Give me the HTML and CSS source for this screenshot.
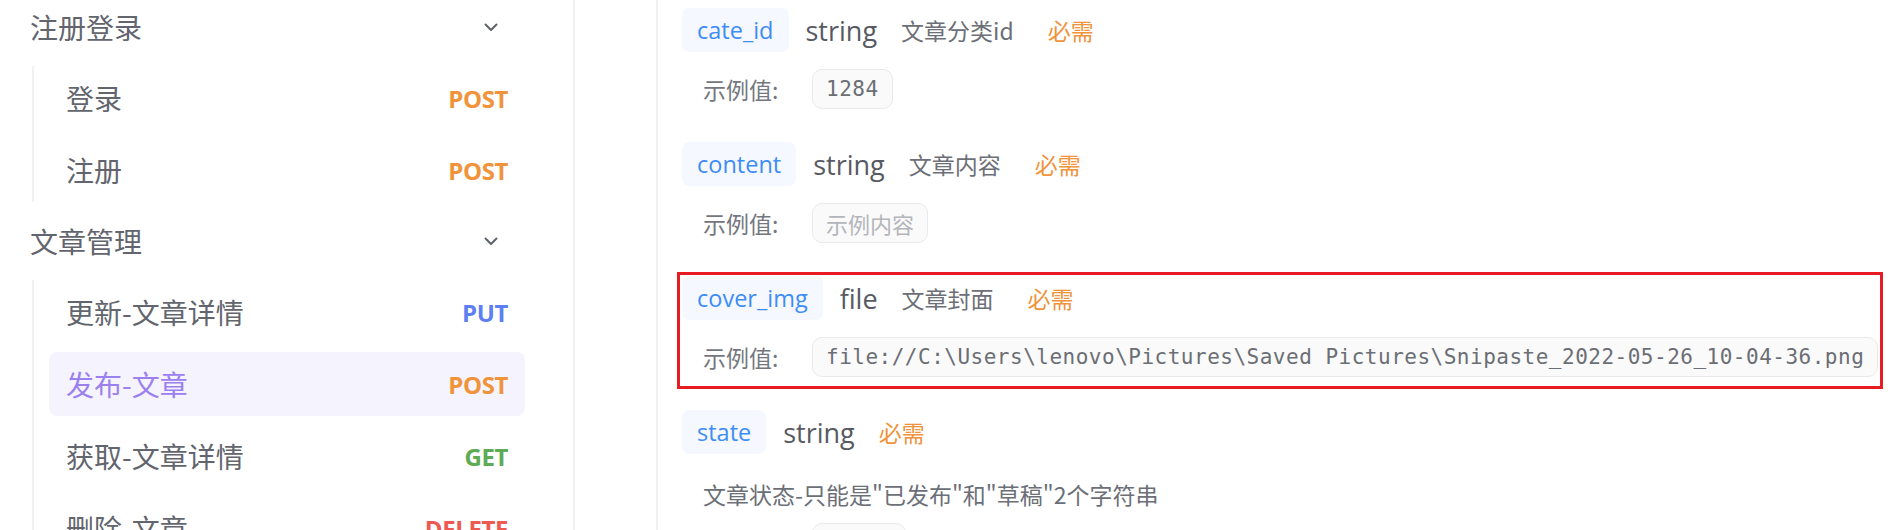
FILE: index.html
```html
<!DOCTYPE html>
<html lang="zh-CN">
<head>
<meta charset="utf-8">
<title>接口文档</title>
<link rel="stylesheet" href="styles.css">
</head>
<body>
<div class="page">
  <aside class="sidebar">
    <div class="group">
      <div class="group-head">
        <span class="group-title">注册登录</span>
        <svg class="chev" width="14" height="9" viewBox="0 0 14 9"><polyline points="1.5,1.5 7,7 12.5,1.5" fill="none" stroke="#5f626a" stroke-width="2" stroke-linecap="round" stroke-linejoin="round"/></svg>
      </div>
      <div class="sublist">
        <div class="item"><span class="item-name">登录</span><span class="m post">POST</span></div>
        <div class="item"><span class="item-name">注册</span><span class="m post">POST</span></div>
      </div>
    </div>
    <div class="group">
      <div class="group-head">
        <span class="group-title">文章管理</span>
        <svg class="chev" width="14" height="9" viewBox="0 0 14 9"><polyline points="1.5,1.5 7,7 12.5,1.5" fill="none" stroke="#5f626a" stroke-width="2" stroke-linecap="round" stroke-linejoin="round"/></svg>
      </div>
      <div class="sublist">
        <div class="item"><span class="item-name">更新-文章详情</span><span class="m put">PUT</span></div>
        <div class="item active"><span class="item-name">发布-文章</span><span class="m post">POST</span></div>
        <div class="item"><span class="item-name">获取-文章详情</span><span class="m get">GET</span></div>
        <div class="item"><span class="item-name">删除-文章</span><span class="m del">DELETE</span></div>
      </div>
    </div>
  </aside>
  <div class="spacer"></div>
  <main class="main">
    <div class="param">
      <div class="param-head">
        <span class="tag">cate_id</span>
        <span class="type">string</span>
        <span class="desc">文章分类id</span>
        <span class="req">必需</span>
      </div>
      <div class="example">
        <span class="ex-label">示例值:</span>
        <span class="ex-box mono">1284</span>
      </div>
    </div>
    <div class="param">
      <div class="param-head">
        <span class="tag">content</span>
        <span class="type">string</span>
        <span class="desc">文章内容</span>
        <span class="req">必需</span>
      </div>
      <div class="example">
        <span class="ex-label">示例值:</span>
        <span class="ex-box placeholder">示例内容</span>
      </div>
    </div>
    <div class="param marked">
      <div class="param-head">
        <span class="tag">cover_img</span>
        <span class="type">file</span>
        <span class="desc">文章封面</span>
        <span class="req">必需</span>
      </div>
      <div class="example">
        <span class="ex-label">示例值:</span>
        <span class="ex-box mono">file://C:\Users\lenovo\Pictures\Saved Pictures\Snipaste_2022-05-26_10-04-36.png</span>
      </div>
    </div>
    <div class="param">
      <div class="param-head">
        <span class="tag">state</span>
        <span class="type">string</span>
        <span class="req">必需</span>
      </div>
      <div class="note">文章状态-只能是"已发布"和"草稿"2个字符串</div>
      <div class="example tight">
        <span class="ex-label">示例值:</span>
        <span class="ex-box placeholder">已发布</span>
      </div>
    </div>
  </main>
</div>
</body>
</html>
```
FILE: styles.css
```css
html, body {
  margin: 0;
  padding: 0;
  background: #ffffff;
  overflow: hidden;
}
body {
  font-family: "Open Sans", "Noto Sans CJK SC", sans-serif;
  color: #60636b;
}
.page {
  display: flex;
  align-items: flex-start;
  height: 530px;
  overflow: hidden;
}
.sidebar {
  width: 495px;
  flex: none;
  padding: 0 48px 0 30px;
  border-right: 2px solid #f0f0f4;
  height: 600px;
}
.group {
  margin-bottom: 12px;
}
.group-head {
  height: 54px;
  display: flex;
  align-items: center;
  justify-content: space-between;
  padding-right: 27px;
}
.group-title {
  font-family: "Noto Sans CJK SC", sans-serif;
  font-size: 28px;
  color: #62656d;
}
.chev {
  display: block;
}
.sublist {
  margin: 12px 0 0 2px;
  border-left: 2px solid #f0f0f5;
  padding-left: 15px;
  display: flex;
  flex-direction: column;
  gap: 8px;
}
.item {
  height: 64px;
  padding: 0 17px;
  border-radius: 8px;
  display: flex;
  align-items: center;
  justify-content: space-between;
}
.item-name {
  font-family: "Noto Sans CJK SC", sans-serif;
  font-size: 28px;
  color: #62656d;
}
.item.active {
  background: #f5f3fe;
}
.item.active .item-name {
  color: #9b80ef;
}
.m {
  font-family: "Open Sans", sans-serif;
  font-weight: 700;
  font-size: 24px;
  letter-spacing: -0.4px;
}
.post { color: #f0933a; }
.put { color: #5e7ff1; }
.get { color: #5eaa55; }
.del { color: #ee5a52; }

.spacer {
  width: 81px;
  flex: none;
}
.main {
  flex: 1;
  border-left: 2px solid #f0f0f4;
  padding: 8px 0 0 24px;
  height: 600px;
  min-width: 0;
}
.param {
  width: fit-content;
  margin-bottom: 33px;
  position: relative;
}
.param.marked::after {
  content: "";
  position: absolute;
  top: -4px;
  left: -5px;
  right: -5px;
  bottom: -12px;
  border: 3px solid #e81b23;
  pointer-events: none;
}
.param-head {
  display: flex;
  align-items: center;
  height: 44px;
}
.tag {
  height: 44px;
  display: flex;
  align-items: center;
  padding: 0 15px;
  background: #f5f9ff;
  border-radius: 7px;
  color: #3e8cf6;
  font-size: 23.5px;
  font-weight: 500;
  margin-right: 17px;
}
.type {
  font-size: 27px;
  font-weight: 500;
  color: #575a62;
  margin-right: 24px;
}
.desc {
  font-family: "Noto Sans CJK SC", sans-serif;
  font-size: 23px;
  color: #6c6f77;
  margin-right: 34px;
}
.req {
  font-family: "Noto Sans CJK SC", sans-serif;
  font-size: 23px;
  color: #f0933a;
}
.example {
  display: flex;
  align-items: center;
  margin-top: 17px;
  padding-left: 21px;
}
.example.tight {
  margin-top: 9px;
}
.ex-label {
  width: 109px;
  flex: none;
  font-family: "Noto Sans CJK SC", sans-serif;
  font-size: 23px;
  color: #74777f;
}
.ex-box {
  height: 40px;
  box-sizing: border-box;
  display: flex;
  align-items: center;
  padding: 0 13px;
  background: #fafafa;
  border: 1px solid #e9e9ec;
  border-radius: 10px;
  white-space: nowrap;
}
.mono {
  font-family: "DejaVu Sans Mono", monospace;
  font-size: 21px;
  letter-spacing: 0.5px;
  color: #6b6e75;
}
.placeholder {
  font-family: "Noto Sans CJK SC", sans-serif;
  font-size: 22px;
  color: #b3b5ba;
}
.note {
  margin-top: 20px;
  height: 40px;
  display: flex;
  align-items: center;
  padding-left: 21px;
  font-family: "Noto Sans CJK SC", sans-serif;
  font-size: 23px;
  color: #6c6f77;
  white-space: nowrap;
}
```
